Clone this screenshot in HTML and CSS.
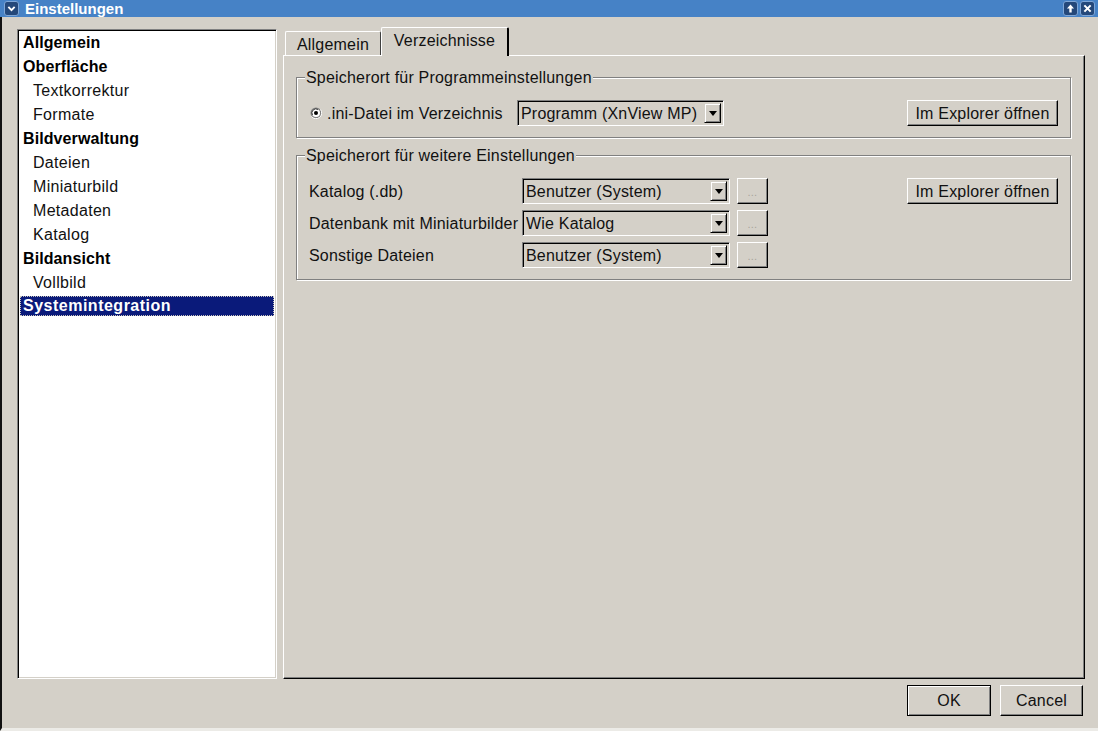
FILE: index.html
```html
<!DOCTYPE html>
<html lang="de">
<head>
<meta charset="utf-8">
<title>Einstellungen</title>
<link rel="stylesheet" href="styles.css">
</head>
<body>
<div class="window">
  <div class="titlebar">
    <span class="tb-icon"><svg width="14" height="14" viewBox="0 0 14 14"><path d="M3 5 L7 9 L11 5" fill="none" stroke="#fff" stroke-width="2.4"/></svg></span>
    <span class="title">Einstellungen</span>
    <span class="tb-right">
      <span class="tb-icon"><svg width="14" height="14" viewBox="0 0 14 14"><path d="M7 2 L11.5 7 H8.5 V12 H5.5 V7 H2.5 Z" fill="#fff"/></svg></span>
      <span class="tb-icon"><svg width="14" height="14" viewBox="0 0 14 14"><path d="M3 3 L11 11 M11 3 L3 11" stroke="#fff" stroke-width="2.6"/></svg></span>
    </span>
  </div>
  <div class="content">
    <div class="main">
      <div class="list">
        <div class="item top">Allgemein</div>
        <div class="item top">Oberfläche</div>
        <div class="item sub">Textkorrektur</div>
        <div class="item sub">Formate</div>
        <div class="item top">Bildverwaltung</div>
        <div class="item sub">Dateien</div>
        <div class="item sub">Miniaturbild</div>
        <div class="item sub">Metadaten</div>
        <div class="item sub">Katalog</div>
        <div class="item top">Bildansicht</div>
        <div class="item sub">Vollbild</div>
        <div class="item top selected">Systemintegration</div>
      </div>
      <div class="tabs">
        <div class="tabbar">
          <div class="tab">Allgemein</div>
          <div class="tab active">Verzeichnisse</div>
        </div>
        <div class="panel">
          <fieldset class="group g1">
            <legend>Speicherort für Programmeinstellungen</legend>
            <div class="row1">
              <span class="radio"><svg width="12" height="12" viewBox="0 0 12 12"><circle cx="6" cy="6" r="5.5" fill="#808080"/><path d="M1.5 9.5 A5.5 5.5 0 0 0 10.5 2.5" fill="none" stroke="#fff" stroke-width="1"/><circle cx="6" cy="6" r="4" fill="#fff"/><path d="M2.5 8 A4 4 0 0 1 8 2.5" fill="none" stroke="#404040" stroke-width="1"/><circle cx="6" cy="6" r="2" fill="#000"/></svg></span>
              <span class="label r1label">.ini-Datei im Verzeichnis</span>
              <div class="combo w1"><span class="ctext">Programm (XnView MP)</span><span class="arrow"></span></div>
              <span class="spacer"></span>
              <button class="btn explorer">Im Explorer öffnen</button>
            </div>
          </fieldset>
          <fieldset class="group g2">
            <legend>Speicherort für weitere Einstellungen</legend>
            <div class="grid">
              <span class="label">Katalog (.db)</span>
              <div class="combo"><span class="ctext">Benutzer (System)</span><span class="arrow"></span></div>
              <button class="btn dots">...</button>
              <span></span>
              <button class="btn explorer">Im Explorer öffnen</button>

              <span class="label">Datenbank mit Miniaturbilder</span>
              <div class="combo"><span class="ctext">Wie Katalog</span><span class="arrow"></span></div>
              <button class="btn dots">...</button>
              <span></span><span></span>

              <span class="label">Sonstige Dateien</span>
              <div class="combo"><span class="ctext">Benutzer (System)</span><span class="arrow"></span></div>
              <button class="btn dots">...</button>
              <span></span><span></span>
            </div>
          </fieldset>
        </div>
      </div>
    </div>
    <div class="footer">
      <button class="btn ok">OK</button>
      <button class="btn cancel">Cancel</button>
    </div>
  </div>
</div>
</body>
</html>
```

FILE: styles.css
```css
* { box-sizing: border-box; }
html, body { margin: 0; padding: 0; }
body {
  font-family: "Liberation Sans", Arial, sans-serif;
  font-size: 16px;
  letter-spacing: 0.2px;
  color: #111;
  background: #d4d0c8;
}
.window {
  width: 1098px;
  height: 731px;
  display: flex;
  flex-direction: column;
  background: #d4d0c8;
  overflow: hidden;
}
.titlebar {
  height: 17px;
  background: #4682c6;
  display: flex;
  align-items: center;
  padding: 0 3px 0 4px;
}
.tb-icon {
  width: 15px;
  height: 15px;
  background: #24487a;
  border: 1px solid #7fa6d6;
  border-radius: 3px;
  display: flex;
  align-items: center;
  justify-content: center;
}
.tb-icon svg { width: 11px; height: 11px; }
.title {
  color: #fff;
  font-weight: bold;
  font-size: 15px;
  letter-spacing: 0;
  margin-left: 6px;
  line-height: 17px;
}
.tb-right {
  margin-left: auto;
  display: flex;
  gap: 2px;
}
.content {
  flex: 1;
  display: flex;
  flex-direction: column;
  padding: 10px 13px 0 15px;
  border-left: 2px solid #111;
  border-bottom: 3px solid #ecebe7;
}
.main {
  display: flex;
  gap: 6px;
  height: 652px;
}
.list {
  margin-top: 2px;
  width: 260px;
  height: 650px;
  background: #fff;
  border: 1px solid;
  border-color: #808080 #fff #fff #808080;
  box-shadow: inset 1px 1px 0 #000, inset -1px -1px 0 #d4d0c8;
  padding: 3px 2px 0;
  display: flex;
  flex-direction: column;
  gap: 4px;
}
.item {
  height: 20px;
  line-height: 20px;
  white-space: nowrap;
  flex: none;
}
.item.top { font-weight: bold; font-size: 16px; padding-left: 3px; letter-spacing: 0.1px; color: #000; }
.item.sub { font-size: 16px; padding-left: 13px; letter-spacing: 0.3px; }
.item.selected {
  background: #0a1a7a;
  color: #fff;
  letter-spacing: 0.5px;
  outline: 1px dotted #c8c4bc;
  outline-offset: -1px;
  margin-top: -1px;
  margin-bottom: 1px;
}
.tabs {
  flex: 1;
  display: flex;
  flex-direction: column;
}
.tabbar {
  height: 28px;
  display: flex;
  align-items: flex-end;
  padding-left: 2px;
}
.tab {
  height: 24px;
  width: 96px;
  border: 1px solid;
  border-color: #fff #404040 transparent #fff;
  border-bottom: none;
  border-radius: 2px 2px 0 0;
  text-align: center;
  line-height: 24px;
  padding-top: 1px;
}
.tab.active {
  height: 29px;
  width: 128px;
  margin-bottom: -1px;
  position: relative;
  z-index: 1;
  background: #d4d0c8;
  border-right: 2px solid #000;
  line-height: 26px;
  padding-top: 0;
}
.panel {
  flex: 1;
  border: 1px solid;
  border-color: #fff #000 #000 #fff;
  box-shadow: inset -1px -1px 0 #808080;
  padding: 13px 13px 0 12px;
}
.group {
  margin: 0;
  border: 1px solid #808080;
  box-shadow: inset 1px 1px 0 #fff, 1px 1px 0 #fff;
  padding: 0;
  min-width: 0;
}
.group legend {
  font-size: 16px;
  line-height: 17px;
  padding: 0 1px;
  background: #d4d0c8;
}
.g1 { padding: 14px 12px 11px 13px; }
.g1 legend { margin-left: -5px; }
.g2 { margin-top: 9px; padding: 14px 12px 11px 12px; }
.g2 legend { margin-left: -4px; }
.row1 {
  display: flex;
  align-items: center;
  height: 26px;
}
.radio { width: 12px; height: 12px; display: flex; margin-right: 5px; }
.r1label { width: 190px; flex: none; }
.spacer { flex: 1; }
.label { white-space: nowrap; padding-top: 1px; }
.combo {
  height: 26px;
  background: #d4d0c8;
  border: 1px solid;
  border-color: #808080 #fff #fff #808080;
  box-shadow: inset 1px 1px 0 #000, inset -1px -1px 0 #d4d0c8;
  display: flex;
  align-items: center;
  padding: 2px 2px 2px 3px;
}
.combo.w1 { width: 207px; }
.ctext { flex: 1; white-space: nowrap; overflow: hidden; padding-top: 1px; }
.arrow {
  width: 17px;
  height: 20px;
  border: 1px solid;
  border-color: #d4d0c8 #000 #000 #d4d0c8;
  box-shadow: inset 1px 1px 0 #fff, inset -1px -1px 0 #808080;
  display: flex;
  align-items: center;
  justify-content: center;
}
.arrow::after {
  content: "";
  border-left: 4px solid transparent;
  border-right: 4px solid transparent;
  border-top: 5px solid #000;
  margin-top: 1px;
}
.grid {
  display: grid;
  grid-template-columns: 213px 208px 38px 1fr 151px;
  grid-auto-rows: 26px;
  row-gap: 6px;
  align-items: center;
}
.grid .dots { margin-left: 7px; }
.grid .combo { width: 208px; }
.btn {
  font-family: "Liberation Sans", Arial, sans-serif;
  font-size: 16px;
  letter-spacing: 0.2px;
  color: #111;
  background: #d4d0c8;
  border: 1px solid;
  border-color: #fff #000 #000 #fff;
  box-shadow: inset -1px -1px 0 #808080;
  padding: 1px 0 0;
  height: 26px;
  cursor: default;
}
.explorer { width: 151px; }
.dots {
  width: 31px;
  color: #a8a49c;
  font-size: 11px;
  line-height: 20px;
}
.footer {
  display: flex;
  justify-content: flex-end;
  gap: 9px;
  margin-top: 6px;
  padding-right: 2px;
}
.ok {
  width: 84px;
  height: 31px;
  border: 1px solid #000;
  box-shadow: inset 1px 1px 0 #fff, inset -1px -1px 0 #808080;
}
.cancel {
  width: 83px;
  height: 31px;
}
```
